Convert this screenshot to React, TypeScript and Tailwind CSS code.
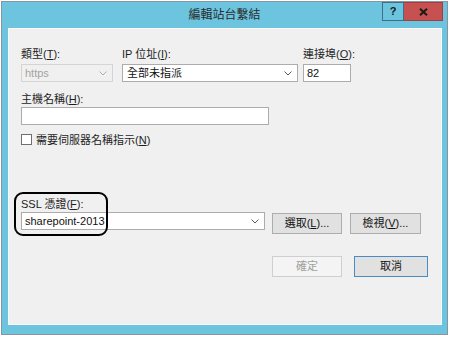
import React from "react";

const Chevron = ({ color = "#5a5a5a" }: { color?: string }) => (
  <svg width="8" height="5" viewBox="0 0 8 5" className="shrink-0">
    <polyline points="0.5,0.5 4,4 7.5,0.5" fill="none" stroke={color} strokeWidth="1" />
  </svg>
);

const U = ({ children }: { children: React.ReactNode }) => (
  <span className="underline underline-offset-[1px]">{children}</span>
);

const Label = ({ children }: { children: React.ReactNode }) => (
  <div className="h-[14px] leading-[14px] text-[11px] text-[#1e1e1e] whitespace-nowrap">{children}</div>
);

export default function App() {
  return (
    <div className="w-[450px] h-[338px] bg-white overflow-hidden font-['Liberation_Sans','Noto_Sans_CJK_TC',sans-serif]">
      <div className="ml-[1px] mt-[1px] w-[447px] h-[334px] border border-[#8596a0] bg-[#6cc4df] flex flex-col">
        {/* title bar */}
        <div className="relative h-[26px] shrink-0 flex items-center justify-center">
          <span className="text-[12px] text-[#2b2b2b] leading-none">編輯站台繫結</span>
          <div className="absolute right-[4px] top-0 flex">
            <div className="w-[22px] h-[19px] border border-[#3d6f85] bg-[#6cc4df] flex items-center justify-center text-[11px] font-bold text-[#1a1a1a]">?</div>
            <div className="w-[39px] h-[19px] border border-[#a04040] border-l-0 bg-[#c75050] flex items-center justify-center">
              <svg width="9" height="8" viewBox="0 0 9 8">
                <path d="M1 0.8 L8 7.2 M8 0.8 L1 7.2" stroke="#1a1a1a" strokeWidth="2" />
              </svg>
            </div>
          </div>
        </div>
        {/* content */}
        <div className="relative flex-1 ml-[6px] mr-[5px] mb-[9px] border border-[#fafafa] bg-[#f0f0f0] pl-[12px] pt-[18px] flex flex-col">
          {/* row 1 */}
          <div className="flex items-start">
            <div className="w-[92px] flex flex-col">
              <Label>類型(<U>T</U>):</Label>
              <div className="mt-[3px] h-[18px] border border-[#d4d4d4] bg-[#f0f0f0] flex items-center justify-between pl-[3px] pr-[5px]">
                <span className="text-[11px] text-[#a3a3a3]">https</span>
                <Chevron color="#b0b0b0" />
              </div>
            </div>
            <div className="ml-[9px] w-[176px] flex flex-col">
              <Label>IP 位址(<U>I</U>):</Label>
              <div className="mt-[3px] h-[18px] border border-[#acacac] bg-white flex items-center justify-between pl-[4px] pr-[5px]">
                <span className="text-[11px] text-[#111]">全部未指派</span>
                <Chevron />
              </div>
            </div>
            <div className="ml-[5px] w-[48px] flex flex-col">
              <Label>連接埠(<U>O</U>):</Label>
              <div className="mt-[3px] h-[18px] border border-[#acacac] bg-white flex items-center pl-[3px]">
                <span className="text-[11px] text-[#111]">82</span>
              </div>
            </div>
          </div>
          {/* host */}
          <div className="mt-[10px] flex flex-col">
            <Label>主機名稱(<U>H</U>):</Label>
            <div className="mt-[1px] w-[248px] h-[18px] border border-[#acacac] bg-white" />
          </div>
          {/* checkbox */}
          <div className="mt-[9px] flex items-center h-[11px]">
            <div className="w-[11px] h-[11px] border border-[#707070] bg-white" />
            <span className="ml-[4px] text-[11px] leading-[14px] text-[#1e1e1e]">需要伺服器名稱指示(<U>N</U>)</span>
          </div>
          {/* SSL */}
          <div className="mt-[52px] flex flex-col">
            <Label>SSL 憑證(<U>F</U>):</Label>
            <div className="mt-[1px] flex items-start">
              <div className="w-[244px] h-[18px] border border-[#acacac] bg-white flex items-center justify-between pl-[3px] pr-[5px]">
                <span className="text-[11px] text-[#111]">sharepoint-2013</span>
                <Chevron />
              </div>
              <div className="ml-[7px] mt-[1px] w-[70px] h-[21px] border border-[#adadad] bg-[#e1e1e1] flex items-center justify-center text-[11px] text-[#111]">
                選取(<U>L</U>)...
              </div>
              <div className="ml-[8px] mt-[1px] w-[71px] h-[21px] border border-[#adadad] bg-[#e1e1e1] flex items-center justify-center text-[11px] text-[#111]">
                檢視(<U>V</U>)...
              </div>
            </div>
          </div>
          {/* bottom buttons */}
          <div className="mt-[22px] flex">
            <div className="ml-[251px] w-[70px] h-[21px] border border-[#cfcfcf] bg-[#f4f4f4] flex items-center justify-center text-[11px] text-[#a0a0a0]">
              確定
            </div>
            <div className="ml-[12px] w-[74px] h-[21px] border border-[#4a8bc2] bg-[#e1e1e1] flex items-center justify-center text-[11px] text-[#111]">
              取消
            </div>
          </div>
          {/* annotation */}
          <div className="absolute left-[5px] top-[163px] w-[94px] h-[44px] border-2 border-black rounded-[9px]" />
        </div>
      </div>
    </div>
  );
}
